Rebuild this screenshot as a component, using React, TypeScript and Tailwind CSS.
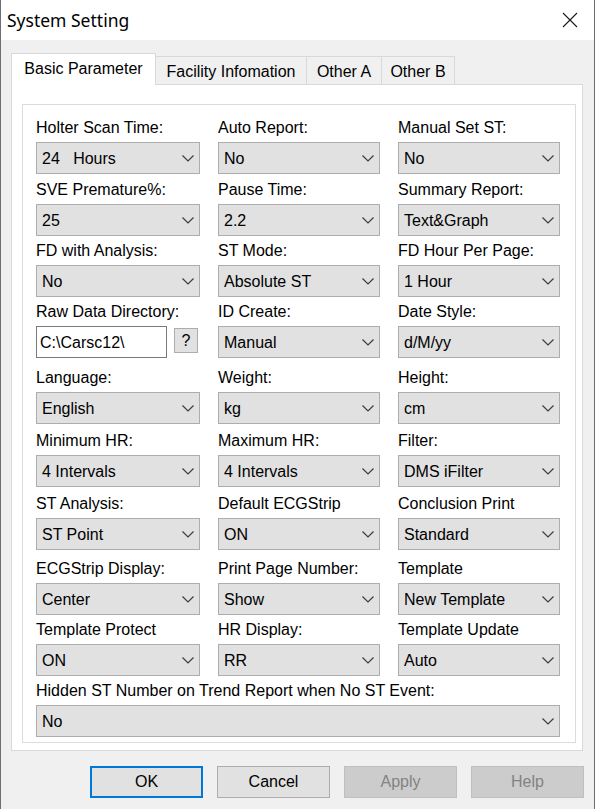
import React from "react";

type Cell = { label: string; value: string; kind?: "combo" | "path" };

const rows: { gap: string; cells: Cell[] }[] = [
  {
    gap: "",
    cells: [
      { label: "Holter Scan Time:", value: "24   Hours" },
      { label: "Auto Report:", value: "No" },
      { label: "Manual Set ST:", value: "No" },
    ],
  },
  {
    gap: "mt-px",
    cells: [
      { label: "SVE Premature%:", value: "25" },
      { label: "Pause Time:", value: "2.2" },
      { label: "Summary Report:", value: "Text&Graph" },
    ],
  },
  {
    gap: "",
    cells: [
      { label: "FD with Analysis:", value: "No" },
      { label: "ST Mode:", value: "Absolute ST" },
      { label: "FD Hour Per Page:", value: "1 Hour" },
    ],
  },
  {
    gap: "",
    cells: [
      { label: "Raw Data Directory:", value: "C:\\Carsc12\\", kind: "path" },
      { label: "ID Create:", value: "Manual" },
      { label: "Date Style:", value: "d/M/yy" },
    ],
  },
  {
    gap: "mt-[5px]",
    cells: [
      { label: "Language:", value: "English" },
      { label: "Weight:", value: "kg" },
      { label: "Height:", value: "cm" },
    ],
  },
  {
    gap: "mt-[2px]",
    cells: [
      { label: "Minimum HR:", value: "4 Intervals" },
      { label: "Maximum HR:", value: "4 Intervals" },
      { label: "Filter:", value: "DMS iFilter" },
    ],
  },
  {
    gap: "mt-[2px]",
    cells: [
      { label: "ST Analysis:", value: "ST Point" },
      { label: "Default ECGStrip", value: "ON" },
      { label: "Conclusion Print", value: "Standard" },
    ],
  },
  {
    gap: "mt-[4px]",
    cells: [
      { label: "ECGStrip Display:", value: "Center" },
      { label: "Print Page Number:", value: "Show" },
      { label: "Template", value: "New Template" },
    ],
  },
  {
    gap: "",
    cells: [
      { label: "Template Protect", value: "ON" },
      { label: "HR Display:", value: "RR" },
      { label: "Template Update", value: "Auto" },
    ],
  },
];

function Chevron() {
  return (
    <svg width="12" height="7" viewBox="0 0 12 7" className="shrink-0">
      <polyline points="0.5,0.5 6,6 11.5,0.5" fill="none" stroke="#3c3c3c" strokeWidth="1.2" />
    </svg>
  );
}

function Combo({ value }: { value: string }) {
  return (
    <div className="flex h-[32px] items-center justify-between border border-[#adadad] bg-[#e1e1e1] pl-[5px] pr-[5px]">
      <span className="whitespace-pre pt-[2px]">{value}</span>
      <Chevron />
    </div>
  );
}

function Label({ text }: { text: string }) {
  return <div className="h-[29px] whitespace-nowrap pt-[6px] leading-[18px]">{text}</div>;
}

function PathField({ value }: { value: string }) {
  return (
    <div className="flex items-start">
      <div className="flex h-[32px] w-[131px] items-center border border-[#7a7a7a] bg-white pl-[3px] pt-[2px]">{value}</div>
      <div className="ml-[7px] mt-[2px] flex h-[25px] w-[24px] items-center justify-center border border-[#adadad] bg-[#e1e1e1] text-[16px]">
        ?
      </div>
    </div>
  );
}

function Tab({ label, active, width }: { label: string; active?: boolean; width: string }) {
  if (active) {
    return (
      <div className={`relative z-10 -mb-px flex h-[32px] items-start justify-center border-x border-t border-[#d9d9d9] bg-white pt-[3px] ${width}`}>
        {label}
      </div>
    );
  }
  return (
    <div className={`flex h-[28px] items-start justify-center border-r border-t border-[#d9d9d9] bg-[#f0f0f0] pt-[3px] ${width}`}>
      {label}
    </div>
  );
}

function Button({ label, primary, disabled }: { label: string; primary?: boolean; disabled?: boolean }) {
  const look = primary
    ? "border-2 border-[#0078d7] bg-[#e1e1e1] text-black"
    : disabled
      ? "border border-[#bfbfbf] bg-[#cccccc] text-[#838383]"
      : "border border-[#adadad] bg-[#e1e1e1] text-black";
  return <div className={`flex h-[32px] w-[113px] items-center justify-center ${look}`}>{label}</div>;
}

export default function App() {
  return (
    <div className="h-[809px] w-[597px] bg-white font-['Liberation_Sans',Arial,sans-serif] text-[16px] text-black">
      <div className="flex h-[809px] w-[595px] flex-col border-x border-[#6e6e6e] bg-[#f0f0f0]">
        <div className="flex h-[40px] shrink-0 items-center justify-between bg-white pl-[6px] pr-[16px]">
          <span className="font-['Noto_Sans',sans-serif] text-[17.5px]">System Setting</span>
          <svg width="16" height="16" viewBox="0 0 16 16">
            <path d="M1 1L15 15M15 1L1 15" stroke="#1a1a1a" strokeWidth="1.1" />
          </svg>
        </div>

        <div className="pl-[10px]">
          <div className="mt-[13px] flex h-[31px] items-end">
            <Tab label="Basic Parameter" active width="w-[145px]" />
            <Tab label="Facility Infomation" width="w-[151px]" />
            <Tab label="Other A" width="w-[75px]" />
            <Tab label="Other B" width="w-[73px]" />
          </div>

          <div className="h-[667px] w-[572px] border border-[#d9d9d9] bg-white pl-[10px] pt-[19px]">
            <div className="h-[639px] w-[554px] border border-[#dcdcdc] pl-[13px] pt-[8px]">
              {rows.map((row, i) => (
                <div key={i} className={`grid grid-cols-[164px_162px_162px] gap-x-[18px] ${row.gap}`}>
                  {row.cells.map((c) => (
                    <div key={c.label}>
                      <Label text={c.label} />
                      {c.kind === "path" ? <PathField value={c.value} /> : <Combo value={c.value} />}
                    </div>
                  ))}
                </div>
              ))}
              <div className="w-[524px]">
                <Label text="Hidden ST Number on Trend Report when No ST Event:" />
                <Combo value="No" />
              </div>
            </div>
          </div>
        </div>

        <div className="ml-[89px] mt-[15px] flex gap-[14px]">
          <Button label="OK" primary />
          <Button label="Cancel" />
          <Button label="Apply" disabled />
          <Button label="Help" disabled />
        </div>
      </div>
    </div>
  );
}
